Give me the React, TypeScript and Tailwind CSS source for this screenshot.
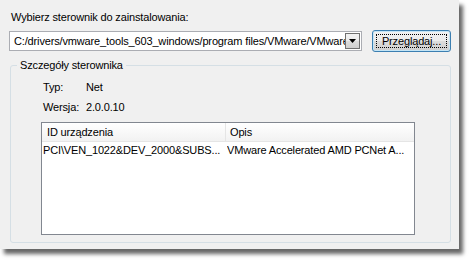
import React from "react";

export default function App() {
  const font = { fontFamily: '"Liberation Sans", Arial, sans-serif' };
  return (
    <div className="w-[469px] h-[261px] bg-white text-black text-[11px] leading-[15px] tracking-[-0.15px]" style={font}>
      <div className="w-[459px] h-[249px] bg-[#f0f0f0] shadow-[4px_5px_4px_rgba(0,0,0,0.6)] pt-[10px] pl-[9px] flex flex-col">
        <div className="pl-[2px] h-[15px]">Wybierz sterownik do zainstalowania:</div>
        <div className="flex items-start mt-[5px] h-[23px]">
          <div className="mt-[1px] w-[353px] h-[20px] border border-[#abadb3] bg-white flex items-center">
            <span className="flex-1 overflow-hidden whitespace-nowrap pl-[4px]">
              C:/drivers/vmware_tools_603_windows/program files/VMware/VMware Tools
            </span>
            <div className="w-[15px] h-[16px] mr-[1px] border border-[#707070] bg-[linear-gradient(#f2f2f2_0%,#ebebeb_50%,#dddddd_50%,#cfcfcf_100%)] flex items-center justify-center">
              <svg width="7" height="4" viewBox="0 0 7 4">
                <path d="M0 0 H7 L3.5 4 Z" fill="#000" />
              </svg>
            </div>
          </div>
          <button className="relative ml-[10px] w-[79px] h-[22px] rounded-[3px] border border-[#3c7fb1] bg-[linear-gradient(#f2f2f2_0%,#ebebeb_50%,#dddddd_50%,#cfcfcf_100%)] shadow-[inset_0_0_0_1px_#c4e5f6] text-[11px]">
            <span className="absolute inset-[3px] border border-dotted border-black" />
            Przeglądaj...
          </button>
        </div>
        <fieldset className="mt-[5px] ml-[1px] w-[441px] h-[185px] border border-[#d5dfe5] rounded-[3px]">
          <legend className="ml-[6px] px-[3px] h-[15px]">Szczegóły sterownika</legend>
          <div className="pl-[30px]">
            <div className="flex mt-[7px] pl-[2px] h-[15px]">
              <span className="w-[43px]">Typ:</span>
              <span>Net</span>
            </div>
            <div className="flex mt-[5px] pl-[2px] h-[15px]">
              <span className="w-[43px]">Wersja:</span>
              <span>2.0.0.10</span>
            </div>
            <div className="mt-[7px] w-[374px] h-[113px] border border-[#828790] bg-white flex flex-col">
              <div className="flex h-[19px] border-b border-[#e5e5e5] bg-[linear-gradient(#ffffff,#f2f2f2)]">
                <div className="w-[184px] border-r border-[#e5e5e5] pl-[5px] flex items-center">ID urządzenia</div>
                <div className="flex-1 pl-[4px] flex items-center">Opis</div>
              </div>
              <div className="flex h-[16px] items-center">
                <div className="w-[185px] pl-[1px] whitespace-nowrap overflow-hidden">PCI\VEN_1022&amp;DEV_2000&amp;SUBS...</div>
                <div className="flex-1 whitespace-nowrap overflow-hidden">VMware Accelerated AMD PCNet A...</div>
              </div>
            </div>
          </div>
        </fieldset>
      </div>
    </div>
  );
}
